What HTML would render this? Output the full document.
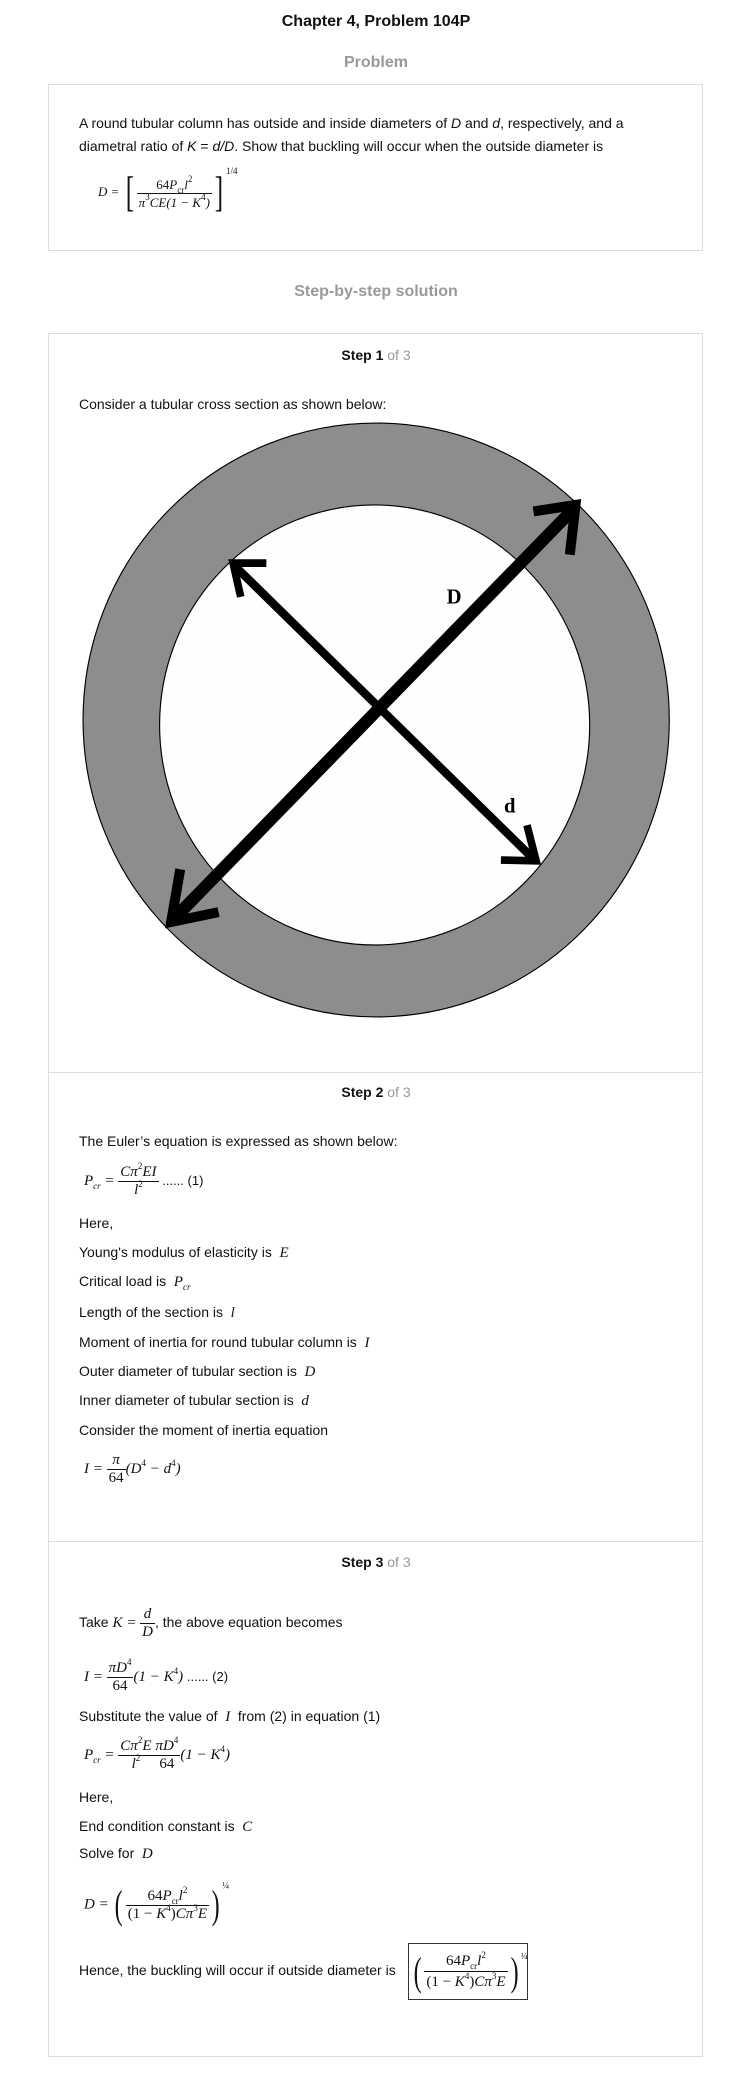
<!DOCTYPE html>
<html><head><meta charset="utf-8">
<style>
body{margin:0;background:#fff;width:752px;height:2082px;position:relative;font-family:"Liberation Sans",Arial,sans-serif;font-size:14px;color:#111;overflow:hidden}
.a{position:absolute;white-space:nowrap;line-height:16px}
.t{left:79px}
.h{left:0;width:752px;text-align:center;font-weight:bold;font-size:16px}
.g{color:#999}
.box{position:absolute;left:48px;width:653px;border:1px solid #ddd}
.hr{position:absolute;left:48px;width:655px;height:1px;background:#ddd}
.m{font-family:"Liberation Serif",serif;font-style:italic;font-size:15px}
.r{font-style:normal}
.fr{display:inline-block;vertical-align:middle;text-align:center;line-height:17px}
.fr>span{display:block;padding:0 2px}
.fr>span:first-child{border-bottom:1px solid #111}
sup{font-size:9px;vertical-align:7px;line-height:0}
sub{font-size:9px;vertical-align:-4px;line-height:0}
.ml{position:absolute;left:84px;white-space:nowrap}
.big{font-size:40px;font-style:normal;font-weight:100;vertical-align:middle;line-height:40px;transform:scaleX(0.6);display:inline-block}
.st{font-size:14px}
</style></head><body>
<div class="a h" style="top:14px">Chapter 4, Problem 104P</div>
<div class="a h g" style="top:55px">Problem</div>
<div class="box" style="top:84px;height:165px"></div>
<div class="a t" style="top:115px">A round tubular column has outside and inside diameters of <i>D</i> and <i>d</i>, respectively, and a</div>
<div class="a t" style="top:138px">diametral ratio of <i>K</i> = <i>d/D</i>. Show that buckling will occur when the outside diameter is</div>
<div class="ml m" style="left:98px;top:171px;font-size:13px">D = <span class="big" style="font-size:42px">[</span><span class="fr"><span class="r">64<i>P</i><sub>cr</sub><i>l</i><sup>2</sup></span><span><i>π</i><sup class="r">3</sup><i>CE</i>(1 − <i>K</i><sup class="r">4</sup>)</span></span><span class="big" style="font-size:42px">]</span><sup class="r" style="vertical-align:22px">1/4</sup></div>

<div class="a h g" style="top:284px">Step-by-step solution</div>

<div class="box" style="top:333px;height:1722px"></div>
<div class="hr" style="top:1072px"></div>
<div class="hr" style="top:1541px"></div>

<div class="a h st" style="top:347px">Step 1 <span class="g" style="font-weight:normal">of 3</span></div>
<div class="a t" style="top:396px">Consider a tubular cross section as shown below:</div>
<svg style="position:absolute;left:80px;top:410px" width="600" height="620" viewBox="0 0 1568 1620">
<ellipse cx="774" cy="810" rx="766" ry="776" fill="#8f8c8d" stroke="#000" stroke-width="3"/>
<ellipse cx="770" cy="823" rx="562" ry="575" fill="#fffdfe" stroke="#000" stroke-width="3"/>
<g stroke="#000" fill="none" stroke-linecap="butt">
<line x1="250" y1="1325" x2="1290" y2="258" stroke-width="32"/>
<polyline points="1185,265 1295,248 1280,378" stroke-width="26"/>
<polyline points="262,1200 238,1338 362,1312" stroke-width="26"/>
<line x1="405" y1="408" x2="1180" y2="1168" stroke-width="22"/>
<polyline points="487,400 400,400 420,488" stroke-width="20"/>
<polyline points="1100,1176 1192,1178 1168,1085" stroke-width="20"/>
</g>
<text x="958" y="505" font-family="Liberation Serif,serif" font-weight="bold" font-size="54">D</text>
<text x="1108" y="1052" font-family="Liberation Serif,serif" font-weight="bold" font-size="54">d</text>
</svg>

<div class="a h st" style="top:1084px">Step 2 <span class="g" style="font-weight:normal">of 3</span></div>
<div class="a t" style="top:1133px">The Euler’s equation is expressed as shown below:</div>
<div class="ml m" style="top:1164px"><i>P</i><sub>cr</sub> = <span class="fr"><span><i>Cπ</i><sup class="r">2</sup><i>EI</i></span><span><i>l</i><sup class="r">2</sup></span></span> <span style="font-family:'Liberation Sans',sans-serif;font-style:normal;font-size:13px">...... (1)</span></div>
<div class="a t" style="top:1215px">Here,</div>
<div class="a t" style="top:1244px">Young's modulus of elasticity is <span class="m">&nbsp;E</span></div>
<div class="a t" style="top:1273px">Critical load is <span class="m">&nbsp;P<sub>cr</sub></span></div>
<div class="a t" style="top:1304px">Length of the section is <span class="m">&nbsp;l</span></div>
<div class="a t" style="top:1334px">Moment of inertia for round tubular column is <span class="m">&nbsp;I</span></div>
<div class="a t" style="top:1363px">Outer diameter of tubular section is <span class="m">&nbsp;D</span></div>
<div class="a t" style="top:1392px">Inner diameter of tubular section is <span class="m">&nbsp;d</span></div>
<div class="a t" style="top:1422px">Consider the moment of inertia equation</div>
<div class="ml m" style="top:1452px"><i>I</i> = <span class="fr"><span><i>π</i></span><span class="r">64</span></span>(<i>D</i><sup class="r">4</sup> − <i>d</i><sup class="r">4</sup>)</div>

<div class="a h st" style="top:1554px">Step 3 <span class="g" style="font-weight:normal">of 3</span></div>
<div class="a t" style="line-height:34px;top:1605px">Take <span class="m"><i>K</i> = <span class="fr"><span><i>d</i></span><span><i>D</i></span></span></span>, the above equation becomes</div>
<div class="ml m" style="top:1660px"><i>I</i> = <span class="fr"><span><i>πD</i><sup class="r">4</sup></span><span class="r">64</span></span>(1 − <i>K</i><sup class="r">4</sup>) <span style="font-family:'Liberation Sans',sans-serif;font-style:normal;font-size:13px">...... (2)</span></div>
<div class="a t" style="top:1708px">Substitute the value of <span class="m">&nbsp;I&nbsp;</span> from (2) in equation (1)</div>
<div class="ml m" style="top:1738px"><i>P</i><sub>cr</sub> = <span class="fr"><span><i>Cπ</i><sup class="r">2</sup><i>E</i></span><span><i>l</i><sup class="r">2</sup></span></span><span class="fr"><span><i>πD</i><sup class="r">4</sup></span><span class="r">64</span></span>(1 − <i>K</i><sup class="r">4</sup>)</div>
<div class="a t" style="top:1789px">Here,</div>
<div class="a t" style="top:1818px">End condition constant is <span class="m">&nbsp;C</span></div>
<div class="a t" style="top:1845px">Solve for <span class="m">&nbsp;D</span></div>
<div class="ml m" style="top:1885px"><i>D</i> = <span class="big">(</span><span class="fr"><span class="r">64<i>P</i><sub>cr</sub><i>l</i><sup>2</sup></span><span class="r">(1 − <i>K</i><sup>4</sup>)<i>Cπ</i><sup>3</sup><i>E</i></span></span><span class="big">)</span><sup class="r" style="vertical-align:20px">¼</sup></div>
<div class="a t" style="top:1962px">Hence, the buckling will occur if outside diameter is</div>
<div class="m" style="position:absolute;left:408px;top:1943px;width:120px;height:57px;border:1.5px solid #333;white-space:nowrap;padding-left:2px;box-sizing:border-box;line-height:55px"><span class="big">(</span><span class="fr" style="line-height:20px"><span class="r">64<i>P</i><sub>cr</sub><i>l</i><sup>2</sup></span><span class="r">(1 − <i>K</i><sup>4</sup>)<i>Cπ</i><sup>3</sup><i>E</i></span></span><span class="big">)</span><sup class="r" style="vertical-align:16px">¼</sup></div>
</body></html>
